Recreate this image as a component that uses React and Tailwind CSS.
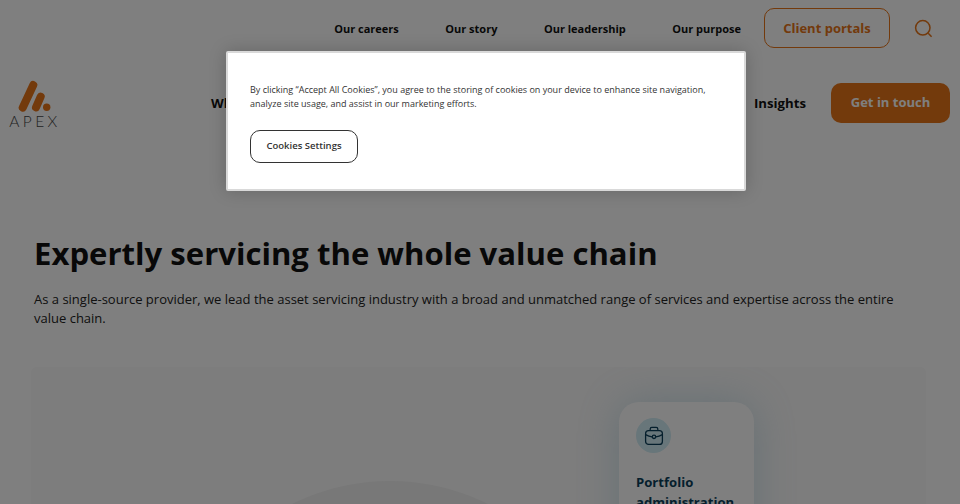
import React from 'react';

const Logo = () => (
  <div className="w-[48px] flex flex-col items-center">
    <svg width="48" height="33" viewBox="0 0 48 33">
      <path d="M12.7 27.7 L23.3 5" stroke="#e67418" strokeWidth="8" strokeLinecap="round" fill="none" />
      <path d="M26 27.3 L30.7 16.7" stroke="#e67418" strokeWidth="8" strokeLinecap="round" fill="none" />
      <circle cx="36.7" cy="27.3" r="3.7" fill="#e67418" />
    </svg>
    <span className="mt-[1px] ml-[2px] whitespace-nowrap text-[15.5px] leading-[14px] tracking-[3.4px] text-[#444] font-['Lato',sans-serif] font-light">APEX</span>
  </div>
);

const Briefcase = () => (
  <svg width="20" height="20" viewBox="0 0 20 20" fill="none" stroke="#0b3f5a" strokeWidth="1.3">
    <rect x="1.6" y="4.6" width="16.8" height="13.8" rx="3" />
    <path d="M6.2 4.6 V3 a1.6 1.6 0 0 1 1.6 -1.6 h4.4 a1.6 1.6 0 0 1 1.6 1.6 v1.6" />
    <path d="M1.6 8.6 C4 10 6 10.6 8.2 10.8 M11.8 10.8 C14 10.6 16 10 18.4 8.6" />
    <circle cx="10" cy="10.8" r="1.7" />
  </svg>
);

export default function App() {
  return (
    <div className="relative h-[504px] w-[960px] overflow-hidden bg-white font-['Open_Sans',sans-serif] text-[#222]">
      {/* top nav */}
      <div className="flex h-[56px] items-start justify-end pt-[8px] pr-[27px]">
        <nav className="flex h-[40px] items-center gap-[46.5px] pt-[2px] text-[11px] font-bold text-[#111]">
          <a>Our careers</a>
          <a>Our story</a>
          <a>Our leadership</a>
          <a>Our purpose</a>
        </nav>
        <button className="ml-[23px] h-[40px] w-[126px] rounded-[10px] border border-[#e67418] pt-[2px] text-[13px] font-bold text-[#e67418]">
          Client portals
        </button>
        <svg className="ml-[24px] mt-[11px]" width="19" height="19" viewBox="0 0 19 19" fill="none" stroke="#e67418" strokeWidth="1.5">
          <circle cx="8.8" cy="8.8" r="7.2" />
          <path d="M14.2 14.2 L17.6 17.8" />
        </svg>
      </div>

      {/* main header */}
      <header className="flex h-[67px] items-start pl-[10px] pr-[10px]">
        <div className="mt-[24px]"><Logo /></div>
        <span className="ml-[153px] mt-[38px] text-[13.2px] font-bold leading-[19px] text-[#111]">What we do</span>
        <span className="ml-auto mt-[38px] text-[13.2px] font-bold leading-[19px] text-[#111]">Insights</span>
        <button className="ml-[25px] mt-[27px] h-[40px] w-[119px] rounded-[10px] bg-[#e67418] text-[13px] font-bold text-white">
          Get in touch
        </button>
      </header>

      {/* intro */}
      <main className="px-[34px] pt-[110px]">
        <h1 className="text-[31.1px] font-bold leading-[40px] text-[#111]">Expertly servicing the whole value chain</h1>
        <p className="mt-[17px] w-[880px] text-[13px] leading-[19px] text-[#222]">
          As a single-source provider, we lead the asset servicing industry with a broad and unmatched range of services and expertise across the entire value chain.
        </p>
        <section className="relative ml-[-3px] mt-[39px] h-[200px] w-[895px] overflow-hidden rounded-[6px] bg-[#fafafa]">
          <div className="absolute left-[139px] top-[114px] h-[440px] w-[440px] rounded-full bg-[#f0f0f0]" />
          <div className="absolute left-[588px] top-[35px] h-[180px] w-[135px] rounded-[20px] bg-white px-[17px] pt-[16px] shadow-[0_0_40px_rgba(100,170,200,0.3)]">
            <div className="flex h-[35px] w-[35px] items-center justify-center rounded-full bg-[#d0ecf4]">
              <Briefcase />
            </div>
            <h3 className="mt-[19px] text-[13.1px] font-bold leading-[20px] text-[#0b3f5a]">Portfolio administration</h3>
          </div>
        </section>
      </main>

      {/* overlay and cookie banner */}
      <div className="absolute inset-0 bg-black/50" />
      <div className="absolute left-[226px] top-[51px] h-[140px] w-[520px] rounded-[2px] border-2 border-[#d9d9d9] bg-white pl-[22px] pt-[30px] shadow-[0_0_18px_rgba(0,0,0,0.2)]">
        <p className="w-[470px] text-[9px] leading-[14px] text-[#333]">
          By clicking “Accept All Cookies”, you agree to the storing of cookies on your device to enhance site navigation, analyze site usage, and assist in our marketing efforts.
        </p>
        <button className="mt-[19px] h-[33px] w-[108px] rounded-[10px] border border-[#333] bg-white text-[9.5px] font-semibold text-[#333]">
          Cookies Settings
        </button>
      </div>
    </div>
  );
}
